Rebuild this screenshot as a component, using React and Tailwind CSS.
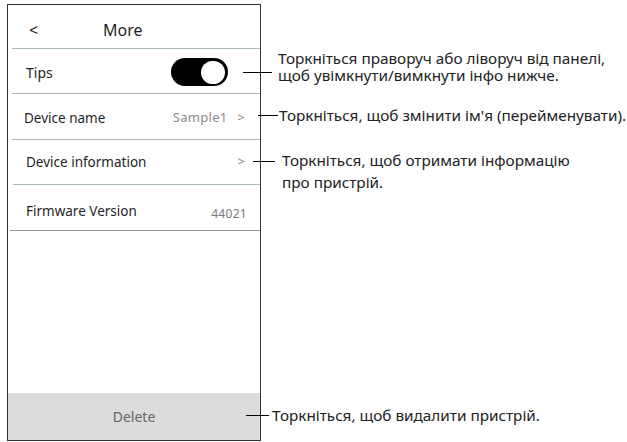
export default function App() {
  const font = { fontFamily: '"Noto Sans", "Open Sans", sans-serif' };

  return (
    <div className="w-[627px] h-[442px] bg-white flex text-[#1f1f1f]" style={font}>
      {/* phone panel */}
      <div className="mt-[4px] ml-[7px] w-[254px] h-[437px] border border-[#333] flex flex-col">
        <div className="h-[43px] flex items-center pt-[6px] text-[16px]">
          <span className="ml-[21px] w-[52px]">&lt;</span>
          <span className="ml-[22px]">More</span>
        </div>
        <div className="h-px bg-[#a9b7b1] ml-[4px]" />

        <div className="h-[44px] flex items-center justify-between pl-[18px] pr-[32px] pt-[2px]">
          <span className="text-[14px]">Tips</span>
          <div className="w-[57px] h-[28px] rounded-full bg-black flex items-center justify-end pr-[3px]">
            <div className="w-[24px] h-[23px] rounded-full bg-white" />
          </div>
        </div>
        <div className="h-px bg-[#a9b7b1] ml-[4px]" />

        <div className="h-[45px] flex items-center justify-between pl-[16px] pr-[15px] pt-[3px]">
          <span className="text-[13.5px]">Device name</span>
          <span className="text-[13px] text-[#8a8a8a] tracking-[0.3px]">
            Sample1 <span className="ml-[6px]">&gt;</span>
          </span>
        </div>
        <div className="h-px bg-[#a9b7b1] ml-[4px]" />

        <div className="h-[44px] flex items-center justify-between pl-[18px] pr-[15px]">
          <span className="text-[13.5px]">Device information</span>
          <span className="text-[13px] text-[#8a8a8a]">&gt;</span>
        </div>
        <div className="h-px bg-[#a9b7b1] ml-[5px]" />

        <div className="h-[45px] flex items-center justify-between pl-[18px] pr-[13px] pt-[8px]">
          <span className="text-[13.5px]">Firmware Version</span>
          <span className="text-[12px] text-[#7a7a7a] pt-[4px] tracking-[0.3px]">44021</span>
        </div>
        <div className="h-px bg-[#8e9c96] ml-[2px]" />

        <div className="flex-1" />
        <div className="h-[47px] bg-[#dcdcdc] flex items-center justify-center text-[14px] text-[#666]">
          Delete
        </div>
      </div>

      {/* callouts */}
      <div className="flex flex-col text-[15.3px] text-[#222]">
        <div className="flex items-start mt-[50px] ml-[-18px]">
          <div className="w-[29px] h-px bg-black mt-[22px]" />
          <div className="ml-[6px] leading-[17px]">
            <p>Торкніться праворуч або ліворуч від панелі,</p>
            <p>щоб увімкнути/вимкнути інфо нижче.</p>
          </div>
        </div>

        <div className="flex items-center mt-[23px] ml-[-3px]">
          <div className="w-[20px] h-px bg-black" />
          <p className="ml-[1px] leading-[17px]">Торкніться, щоб змінити ім'я (перейменувати).</p>
        </div>

        <div className="flex items-start mt-[25px] ml-[-8px]">
          <div className="w-[22px] h-px bg-black mt-[12px]" />
          <div className="ml-[7px] leading-[22px]">
            <p>Торкніться, щоб отримати інформацію</p>
            <p>про пристрій.</p>
          </div>
        </div>

        <div className="flex items-center mt-[214px] ml-[-15px]">
          <div className="w-[23px] h-px bg-black" />
          <p className="ml-[3px] leading-[17px]">Торкніться, щоб видалити пристрій.</p>
        </div>
      </div>
    </div>
  );
}
